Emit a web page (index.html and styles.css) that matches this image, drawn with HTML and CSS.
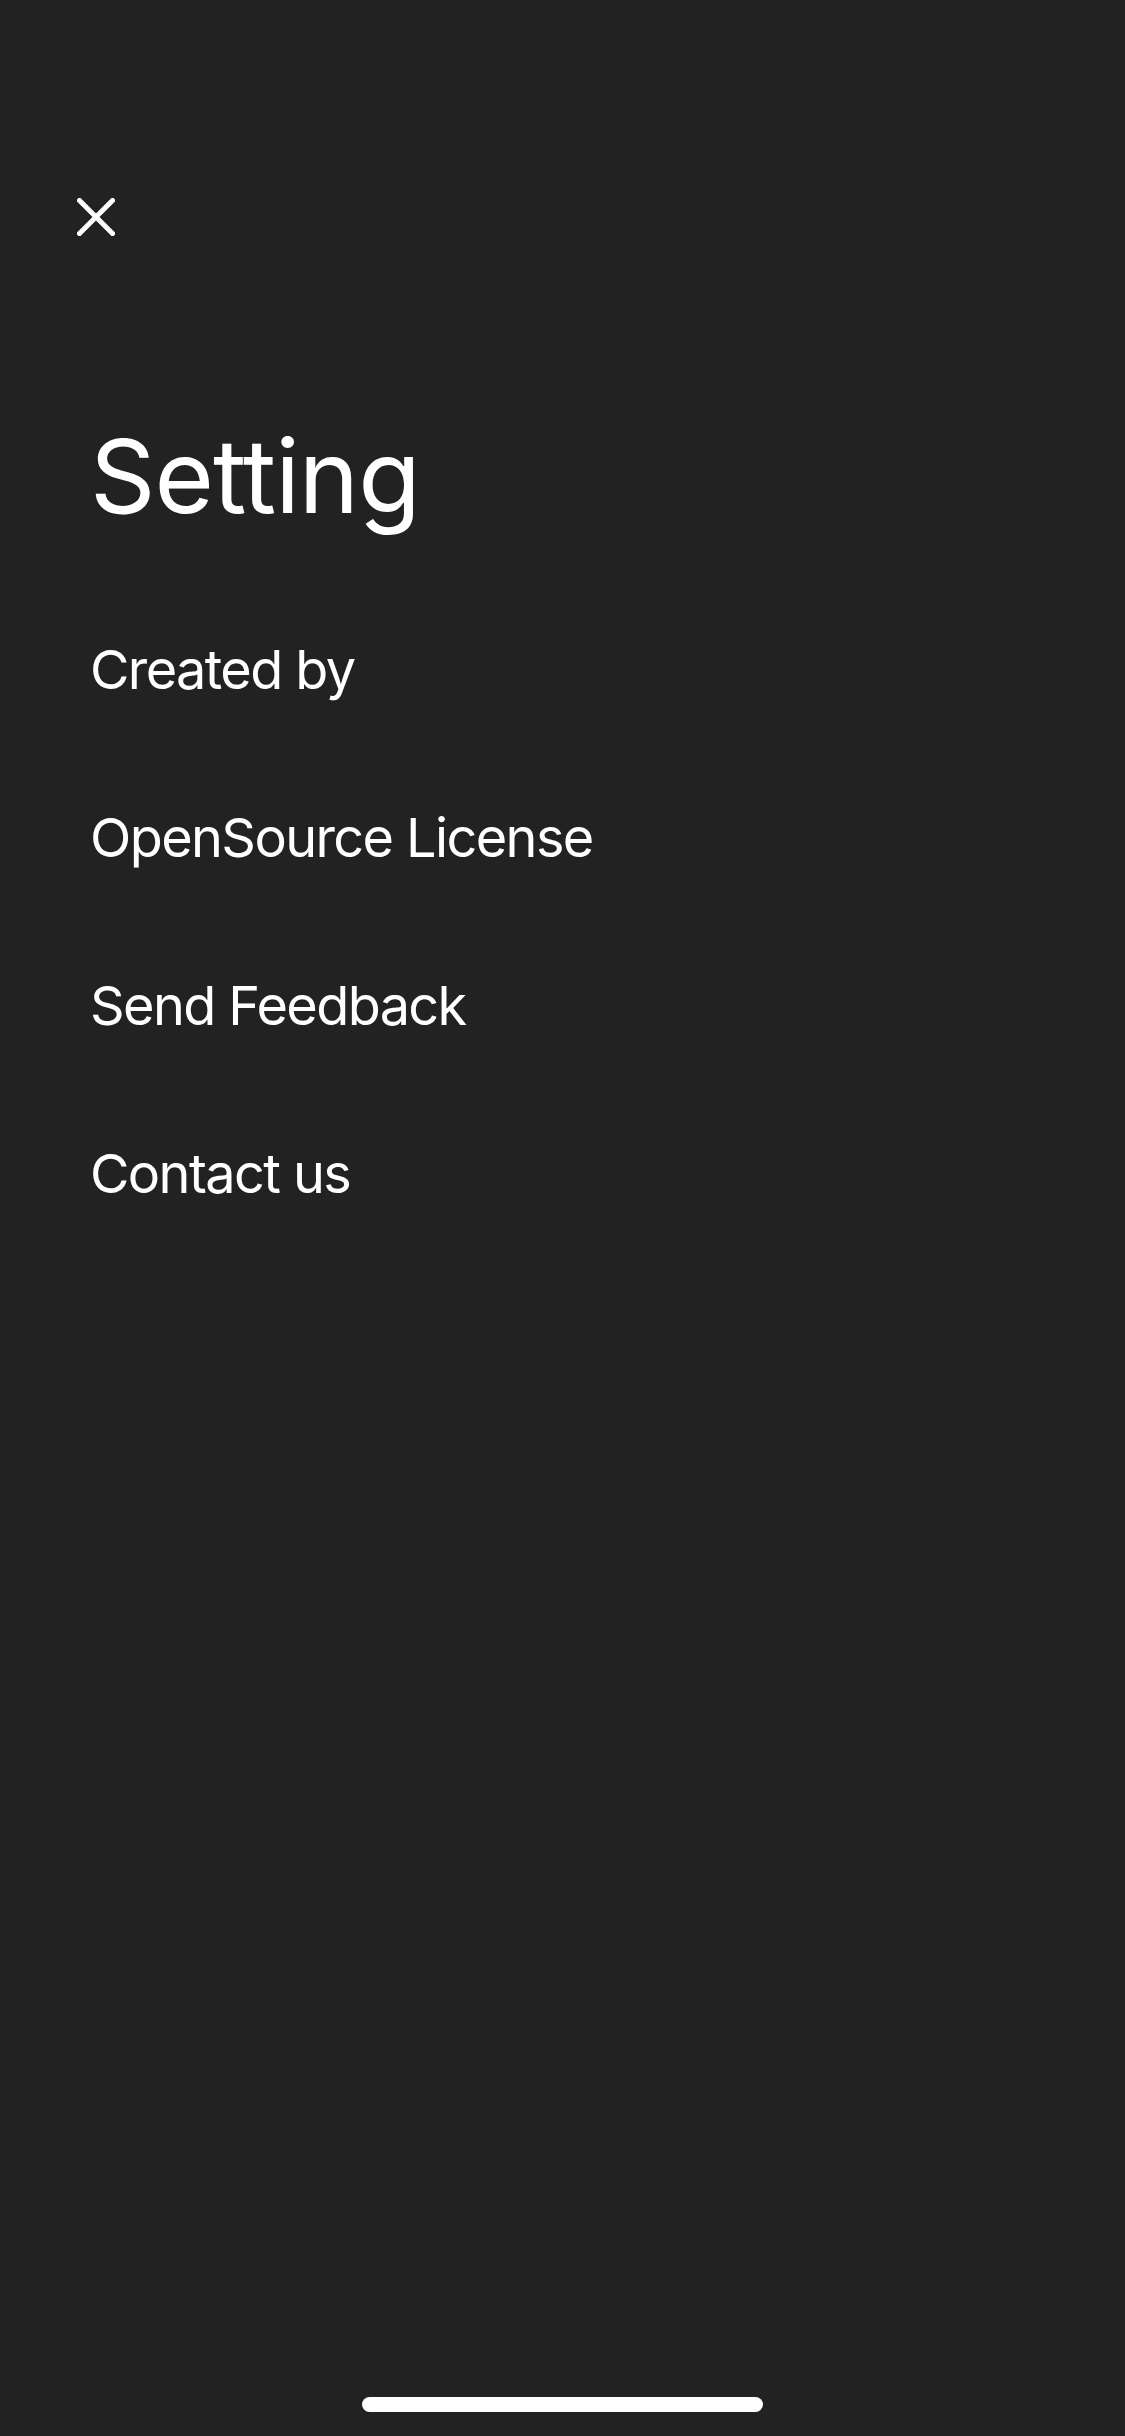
FILE: index.html
```html
<!DOCTYPE html>
<html lang="en">
<head>
<meta charset="utf-8">
<title>Setting</title>
<link rel="stylesheet" href="styles.css">
</head>
<body>
<div class="screen">
  <button class="close" aria-label="Close">
    <svg viewBox="0 0 38 38" width="38" height="38">
      <path d="M2.5 2.5 L35.5 35.5 M35.5 2.5 L2.5 35.5" stroke="#fff" stroke-width="5" stroke-linecap="square" fill="none"/>
    </svg>
  </button>
  <h1 class="title">Setting</h1>
  <ul class="menu">
    <li class="menu-item">Created by</li>
    <li class="menu-item">OpenSource License</li>
    <li class="menu-item">Send Feedback</li>
    <li class="menu-item">Contact us</li>
  </ul>
  <div class="home-indicator"></div>
</div>
</body>
</html>
```
FILE: styles.css
```css
html, body {
  margin: 0;
  padding: 0;
  background: #222222;
}
.screen {
  position: relative;
  width: 1125px;
  height: 2436px;
  background: #222222;
  color: #ffffff;
  font-family: Inter, "Noto Sans", "Liberation Sans", sans-serif;
  display: flex;
  flex-direction: column;
  overflow: hidden;
}
.close {
  margin: 198px 0 0 77px;
  padding: 0;
  width: 38px;
  height: 38px;
  border: 0;
  background: none;
  display: block;
}
.close svg {
  display: block;
}
.title {
  margin: 179px 0 0 90px;
  font-size: 102px;
  font-weight: 400;
  line-height: 122px;
  letter-spacing: -1px;
}
.menu {
  list-style: none;
  margin: 49px 0 0 90px;
  padding: 0;
}
.menu-item {
  font-size: 54px;
  line-height: 168px;
  font-weight: 400;
  letter-spacing: -1.6px;
}
.home-indicator {
  position: absolute;
  left: 362px;
  top: 2397px;
  width: 401px;
  height: 15px;
  border-radius: 8px;
  background: #ffffff;
}
```
